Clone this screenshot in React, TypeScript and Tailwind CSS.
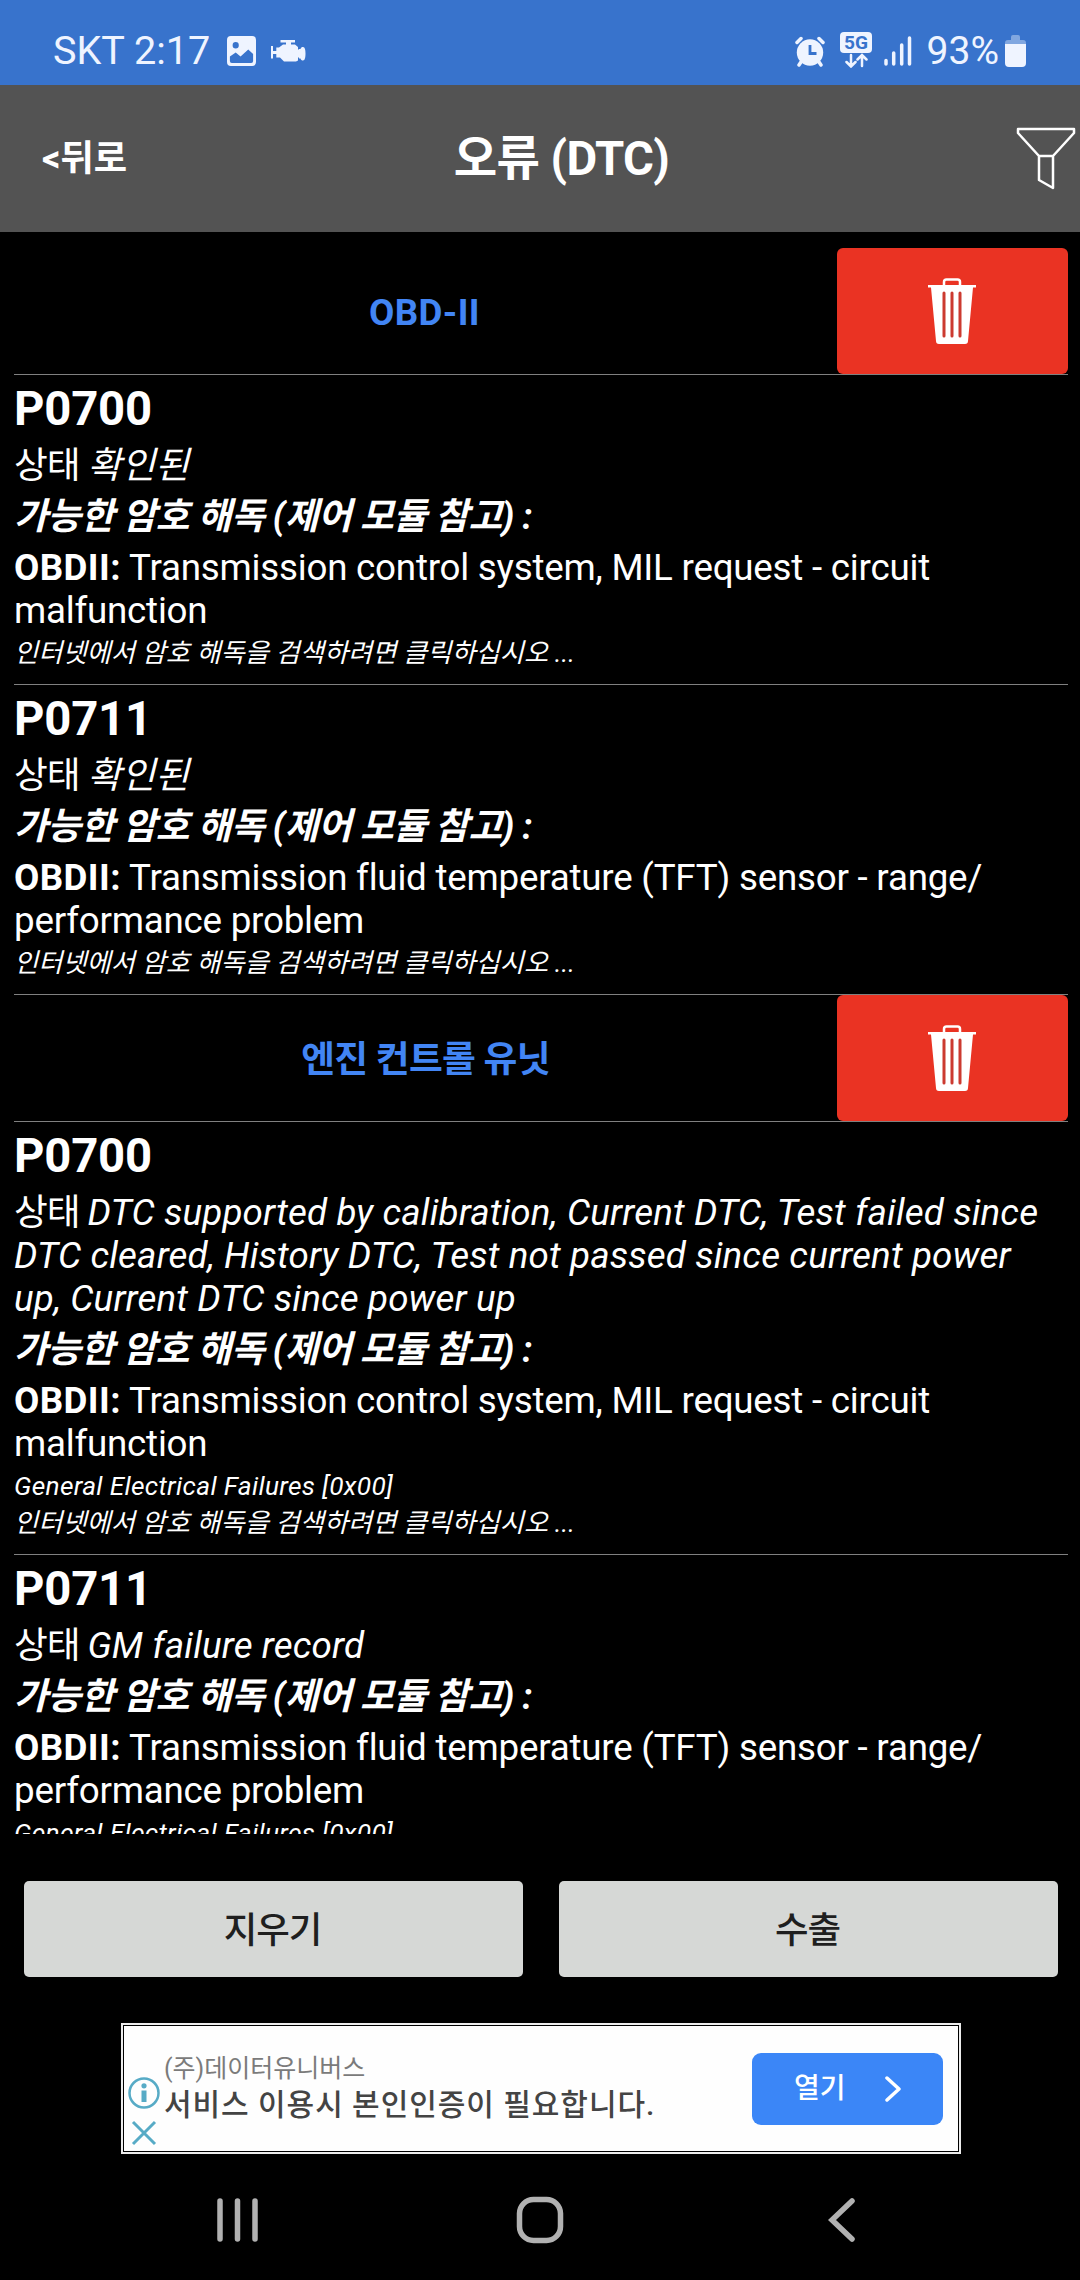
import type { ReactNode } from "react";

interface Dtc {
  code: string;
  status: string;
  text: string;
  extra?: string;
}

interface Unit {
  name: string;
  nameClass: string;
  codes: Dtc[];
}

const units: Unit[] = [
  {
    name: "OBD-II",
    nameClass: "tracking-[0.4px] pr-[2px]",
    codes: [
      { code: "P0700", status: "확인된", text: "Transmission control system, MIL request - circuit malfunction" },
      { code: "P0711", status: "확인된", text: "Transmission fluid temperature (TFT) sensor - range/ performance problem" },
    ],
  },
  {
    name: "엔진 컨트롤 유닛",
    nameClass: "tracking-[-0.7px]",
    codes: [
      {
        code: "P0700",
        status:
          "DTC supported by calibration, Current DTC, Test failed since DTC cleared, History DTC, Test not passed since current power up, Current DTC since power up",
        text: "Transmission control system, MIL request - circuit malfunction",
        extra: "General Electrical Failures [0x00]",
      },
      {
        code: "P0711",
        status: "GM failure record",
        text: "Transmission fluid temperature (TFT) sensor - range/ performance problem",
        extra: "General Electrical Failures [0x00]",
      },
    ],
  },
];

function StatusBar() {
  return (
    <div className="h-[85px] shrink-0 bg-[#3873cc] text-[#eff4ff] flex items-center pl-[53px] pr-[54px] pt-[17px]">
      <span className="text-[39.600px] leading-none">SKT 2:17</span>
      <svg className="ml-[17px]" width="29" height="30" viewBox="0 0 30 30" preserveAspectRatio="none">
        <path
          fill="currentColor"
          fillRule="evenodd"
          d="M4 0h22a4 4 0 0 1 4 4v22a4 4 0 0 1-4 4H4a4 4 0 0 1-4-4V4a4 4 0 0 1 4-4zM9 6a3.200 3.200 0 1 0 0 6.400a3.200 3.200 0 0 0 0-6.400zM3 20.500V25a2 2 0 0 0 2 2h20a2 2 0 0 0 2-2v-7l-5-4.500l-8 7l-5-4z"
        />
      </svg>
      <svg className="ml-[15px]" width="35" height="22" viewBox="0 0 35 22" fill="currentColor">
        <path d="M9.500 0h14.500v2.500h-4V4.500H24l3 2.500v13.500l-2 1H13L9 17.500H5.300V14H2v4.500H0V6h2v5h3.300V7.500H8L12 4.500h3V2.500H9.500z" />
        <path d="M28 9h1.500c.5-1.500 1.200-2 2.500-2c2 0 2.500 3 2.500 6.500S34 20.500 32 20.500c-1.300 0-2-.5-2.500-2H28z" />
        <path d="M26 9.500h3v8h-3z" />
      </svg>
      <div className="flex-1" />
      <svg width="30" height="31" viewBox="0 0 30 31" fill="none" stroke="currentColor" strokeLinecap="round">
        <circle cx="15" cy="16.500" r="13.200" fill="currentColor" stroke="none" />
        <path strokeWidth="3.500" d="M2 6.500L6 2.500M28 6.500L24 2.500M6 26l-2 3M24 26l2 3" />
        <path stroke="#3873cc" strokeWidth="2.800" strokeLinecap="butt" d="M15 9v8.500h6.500" />
      </svg>
      <svg className="ml-[15px] mb-[2px]" width="32" height="36" viewBox="0 0 32 36">
        <rect width="32" height="21" rx="4" fill="currentColor" />
        <text x="16" y="17" textAnchor="middle" fontSize="18.500" fontWeight="700" fill="#3873cc" textLength="24" lengthAdjust="spacingAndGlyphs">
          5G
        </text>
        <path
          fill="none"
          stroke="currentColor"
          strokeWidth="2.500"
          strokeLinecap="round"
          d="M11 23v11M6.500 30l4.500 4.500l4.500-4.500M22 34V23.500M17.500 27.500l4.500-4.500l4.500 4.500"
        />
      </svg>
      <svg className="ml-[12px]" width="28" height="30" viewBox="0 0 28 30" stroke="currentColor" strokeWidth="3.500" strokeLinecap="round">
        <path d="M2 24.500V28M9.700 17V28M17.700 9V28M25.500 2V28" />
      </svg>
      <span className="ml-[15px] text-[39px] leading-none">93%</span>
      <svg className="ml-[6px]" width="21" height="32" viewBox="0 0 21 32" fill="currentColor">
        <path opacity=".4" d="M6 2a2 2 0 0 1 2-2h5a2 2 0 0 1 2 2v3h3a3 3 0 0 1 3 3v1H0V8a3 3 0 0 1 3-3h3z" />
        <path d="M0 9h21v19a4 4 0 0 1-4 4H4a4 4 0 0 1-4-4z" />
      </svg>
    </div>
  );
}

function Header() {
  return (
    <header className="h-[147px] shrink-0 bg-[#535353] flex items-center justify-between pl-[42px] font-bold">
      <button className="w-[88px] pt-px text-left text-[36.250px] whitespace-nowrap">&lt;뒤로</button>
      <h1 className="text-[47.250px] leading-none tracking-[-0.6px] mr-[23px] pt-[2px]">오류 (DTC)</h1>
      <svg className="mr-[4px]" width="60" height="66" viewBox="0 0 60 66" fill="none" stroke="#fff" strokeWidth="2.500" strokeLinejoin="round">
        <path d="M2 3h56v4L37 30H23L2 7zM23 30v24l14 8V30" />
      </svg>
    </header>
  );
}

function TrashIcon() {
  return (
    <svg className="ml-[-1px]" width="48" height="66" viewBox="0 0 48 66">
      <path fill="none" stroke="#fff" strokeWidth="2.500" d="M16 8V4a2.500 2.500 0 0 1 2.500-2.500h11A2.500 2.500 0 0 1 32 4v4" />
      <path fill="#fff" d="M0 7h48v2.500h-3L40 63a3 3 0 0 1-3 3H11a3 3 0 0 1-3-3L3 9.500H0z" />
      <path stroke="#cc3a30" strokeWidth="3" strokeLinecap="round" d="M16 15v43M24 15v43M32 15v43" />
    </svg>
  );
}

function UnitRow({ name, nameClass }: { name: string; nameClass: string }) {
  return (
    <div className="h-[127px] border-b border-[#808080] flex">
      <div className={`flex-1 flex items-center justify-center pt-[3px] text-[#4285f4] font-bold text-[36.750px] ${nameClass}`}>
        {name}
      </div>
      <button className="w-[231px] h-[126px] rounded-[6px] bg-[#ea3323] flex items-center justify-center">
        <TrashIcon />
      </button>
    </div>
  );
}

function DtcRow({ item }: { item: Dtc }) {
  return (
    <div className="border-b border-[#808080] pt-[6px] pb-[13px] text-[36.750px] leading-[43px]">
      <h2 className="font-bold text-[47.250px] leading-[56px] tracking-[-0.2px]">{item.code}</h2>
      <p className="pt-[7px] pr-[8px]">
        <span className="tracking-[-1.1px]">상태 </span>
        <i className="tracking-[0.14px]">{item.status}</i>
      </p>
      <p className="pt-[8px] font-bold italic tracking-[-0.5px]">가능한 암호 해독 (제어 모듈 참고) :</p>
      <p className="pt-[8px] tracking-[-0.23px]">
        <b className="tracking-[0.4px]">OBDII:</b> {item.text}
      </p>
      <div className="pt-[3px] italic text-[26.250px] leading-[36px]">
        {item.extra && <p className="pb-px tracking-[0.33px]">{item.extra}</p>}
        <p className="tracking-[0.05px]">인터넷에서 암호 해독을 검색하려면 클릭하십시오 ...</p>
      </div>
    </div>
  );
}

function FooterButton({ children }: { children: ReactNode }) {
  return (
    <button className="flex-1 h-24 pt-[5px] pr-[2px] rounded-[5px] bg-[#d6d8d6] text-[#1f1f1f] font-medium text-[36.500px] leading-none tracking-[-1px]">
      {children}
    </button>
  );
}

function AdBanner() {
  return (
    <div className="w-[840px] h-[131px] ml-[121px] shrink-0 bg-[#ececec] p-[2px]">
      <div className="h-full border border-black bg-[#fefefe] flex items-center">
        <div className="w-[38px] flex flex-col items-center gap-[11px] pl-[2px] pr-px pt-[49px] pb-[4px]">
          <svg width="32" height="32" viewBox="0 0 32 32" fill="none" stroke="#57abc6">
            <circle cx="16" cy="16" r="14.500" strokeWidth="2.500" />
            <path strokeWidth="5" d="M16 13.500V25" />
            <circle cx="16" cy="8.800" r="2.600" fill="#57abc6" stroke="none" />
          </svg>
          <svg width="26" height="26" viewBox="0 0 26 26" stroke="#57abc6" strokeWidth="3">
            <path d="M2 2L24 24M24 2L2 24" />
          </svg>
        </div>
        <div className="pl-[2px] pb-[2px] flex-1 whitespace-nowrap">
          <p className="text-[25px] leading-[34px] text-[#7b7b7b]">(주)데이터유니버스</p>
          <p className="text-[30px] leading-[38px] tracking-[0.95px] text-[#444] font-medium">서비스 이용시 본인인증이 필요합니다.</p>
        </div>
        <button className="w-[191px] h-[72px] mr-[15px] rounded-[9px] bg-[#3b86f7] text-white font-medium text-[28px] flex items-center pl-[42px]">
          열기
          <svg className="ml-[39px]" width="16" height="26" viewBox="0 0 16 26" fill="none" stroke="#fff" strokeWidth="3.500" strokeLinecap="round" strokeLinejoin="round">
            <path d="M2 2l12 11L2 24" />
          </svg>
        </button>
      </div>
    </div>
  );
}

function NavBar() {
  return (
    <nav className="flex-1 flex items-center pt-[5px]">
      <svg className="ml-[217px]" width="42" height="44" viewBox="0 0 42 44" stroke="#b1b1b1" strokeWidth="5.500" strokeLinecap="round">
        <path d="M3 3v38M20.500 3v38M38 3v38" />
      </svg>
      <svg className="ml-[257px]" width="48" height="48" viewBox="0 0 48 48" fill="none" stroke="#b1b1b1" strokeWidth="5.500">
        <rect x="3.500" y="3.500" width="41" height="41" rx="14" />
      </svg>
      <svg className="ml-[264px]" width="28" height="44" viewBox="0 0 28 44" fill="none" stroke="#b1b1b1" strokeWidth="5.500" strokeLinecap="round">
        <path d="M24 3L4 22l20 19" />
      </svg>
    </nav>
  );
}

export default function App() {
  return (
    <div className="w-[1080px] h-[2280px] bg-black text-white flex flex-col overflow-hidden font-[Roboto,'Noto_Sans_CJK_KR',sans-serif]">
      <StatusBar />
      <Header />
      <main className="h-[1602px] shrink-0 overflow-hidden pl-[14px] pr-[12px] pt-[16px]">
        {units.map((unit) => (
          <section key={unit.name}>
            <UnitRow name={unit.name} nameClass={unit.nameClass} />
            {unit.codes.map((item) => (
              <DtcRow key={item.code} item={item} />
            ))}
          </section>
        ))}
      </main>
      <div className="flex gap-[36px] pl-[24px] pr-[22px] pt-[47px] pb-[46px] shrink-0">
        <FooterButton>지우기</FooterButton>
        <FooterButton>수출</FooterButton>
      </div>
      <AdBanner />
      <NavBar />
    </div>
  );
}
